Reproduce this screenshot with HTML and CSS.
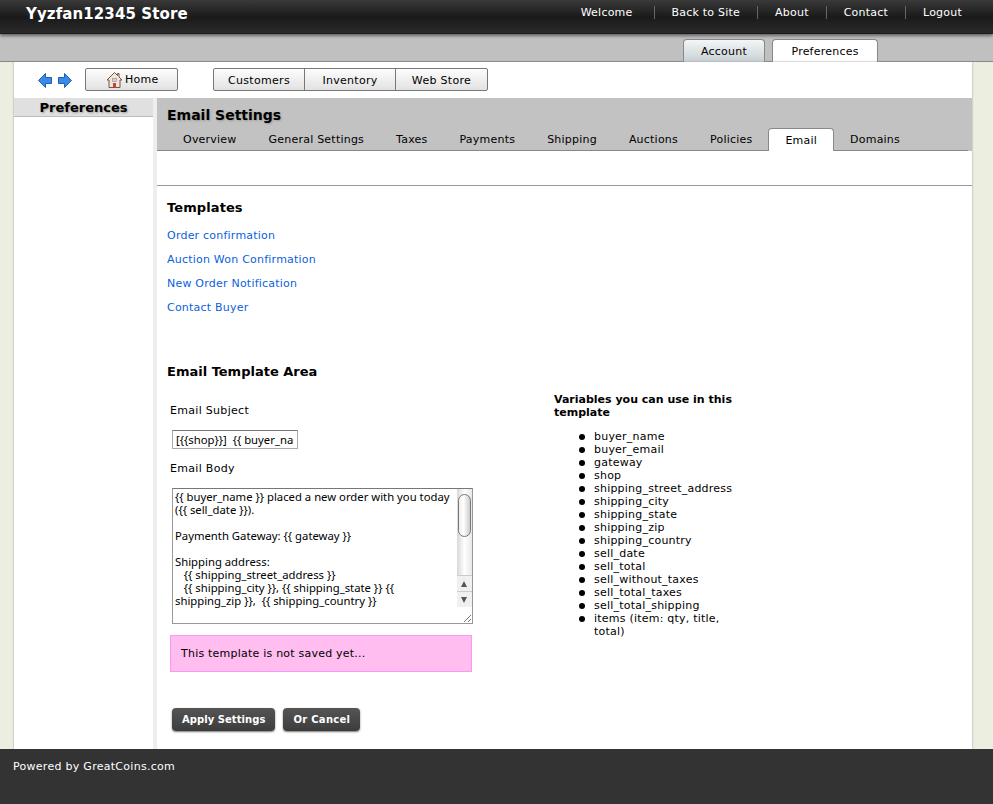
FILE: index.html
```html
<!DOCTYPE html>
<html>
  <head>
    <meta charset="utf-8">
    <title>Email Settings</title>
    <link rel="stylesheet" href="styles.css">
  </head>
  <body>
    <div id="top">
      <div class="store">Yyzfan12345 Store</div>
      <ul class="topnav">
        <li>Welcome</li>
        <li>Back to Site</li>
        <li>About</li>
        <li>Contact</li>
        <li>Logout</li>
      </ul>
    </div>
    <div id="subbar">
      <a class="subtab">Account</a>
      <a class="subtab active">Preferences</a>
    </div>
    <div id="page">
      <div id="toolbar">
        <div class="arrows">
          <svg width="15" height="15" viewBox="0 0 15 15"><path d="M.5 7.500 7.500.5V4.500H13.500V10.500H7.500V14.500Z" fill="#3a8be6" stroke="#1d5fb4"/></svg>
          <svg width="15" height="15" viewBox="0 0 15 15"><path d="M14.500 7.500 7.500.5V4.500H1.500V10.500H7.500V14.500Z" fill="#3a8be6" stroke="#1d5fb4"/></svg>
        </div>
        <a class="tbtn home">
          <svg width="17" height="18" viewBox="0 0 17 17"><path d="M8.500 1 1 8.500H3V16H14V8.500H16L13 5.500V2H11.500V4Z" fill="#efe6dc" stroke="#7a5240"/><rect x="6.500" y="7" width="4" height="3" fill="#c9d3e0" stroke="#9a8a80" stroke-width=".6"/><rect x="7" y="11.500" width="3" height="4.500" fill="#c8403a"/></svg>
          Home
        </a>
        <div class="tgroup">
          <a class="tbtn">Customers</a>
          <a class="tbtn">Inventory</a>
          <a class="tbtn">Web Store</a>
        </div>
      </div>
      <div id="columns">
        <div id="side">
          <h3>Preferences</h3>
        </div>
        <div id="main">
          <div class="mainhead">
            <h2>Email Settings</h2>
            <div class="tabs">
              <a>Overview</a>
              <a>General Settings</a>
              <a>Taxes</a>
              <a>Payments</a>
              <a>Shipping</a>
              <a>Auctions</a>
              <a>Policies</a>
              <a class="active">Email</a>
              <a>Domains</a>
            </div>
          </div>
          <div class="spacer"></div>
          <div class="content">
            <h4>Templates</h4>
            <ul class="links">
              <li><a>Order confirmation</a></li>
              <li><a>Auction Won Confirmation</a></li>
              <li><a>New Order Notification</a></li>
              <li><a>Contact Buyer</a></li>
            </ul>
            <h4 class="area">Email Template Area</h4>
            <div class="formrow">
              <form class="tform">
                <label>Email Subject</label>
                <input type="text" class="subject" value="[{{shop}}]  {{ buyer_name }}">
                <label class="bodylabel">Email Body</label>
                <div class="bodywrap">
                  <textarea class="body" spellcheck="false">{{ buyer_name }} placed a new order with you today ({{ sell_date }}).

Paymenth Gateway: {{ gateway }}

Shipping address:
   {{ shipping_street_address }}
   {{ shipping_city }}, {{ shipping_state }} {{ shipping_zip }},  {{ shipping_country }}</textarea>
                  <div class="scroll">
                    <div class="thumb"></div>
                    <div class="sbtn up"></div>
                    <div class="sbtn down"></div>
                  </div>
                  <svg class="grip" width="9" height="9" viewBox="0 0 9 9"><path d="M1 8 8 1M5 8 8 5" stroke="#777" fill="none"/></svg>
                </div>
                <div class="notice">This template is not saved yet...</div>
                <div class="actions">
                  <a class="dark">Apply Settings</a>
                  <a class="dark">Or Cancel</a>
                </div>
              </form>
              <div class="vars">
                <h5>Variables you can use in this template</h5>
                <ul>
                  <li>buyer_name</li>
                  <li>buyer_email</li>
                  <li>gateway</li>
                  <li>shop</li>
                  <li>shipping_street_address</li>
                  <li>shipping_city</li>
                  <li>shipping_state</li>
                  <li>shipping_zip</li>
                  <li>shipping_country</li>
                  <li>sell_date</li>
                  <li>sell_total</li>
                  <li>sell_without_taxes</li>
                  <li>sell_total_taxes</li>
                  <li>sell_total_shipping</li>
                  <li>items (item: qty, title, total)</li>
                </ul>
              </div>
            </div>
          </div>
        </div>
      </div>
    </div>
    <div id="footer">Powered by GreatCoins.com</div>
  </body>
</html>
```

FILE: styles.css
```css
* {
  box-sizing: border-box;
}
html, body {
  height: 100%;
}
body {
  margin: 0;
  height: 804px;
  overflow: hidden;
  display: flex;
  flex-direction: column;
  background: #eceee0;
  font-family: "DejaVu Sans", Verdana, sans-serif;
  font-size: 11px;
  letter-spacing: .22px;
  color: #000;
}

#top {
  height: 34px;
  flex: none;
  display: flex;
  justify-content: space-between;
  background: linear-gradient(#3a3a3a, #1a1a1a 50%, #2a2a2a 96%, #111);
  color: #fff;
  box-shadow: 0 2px 3px #666;
  position: relative;
}
.store {
  margin-left: 26px;
  margin-top: 5px;
  font-size: 15px;
  line-height: 18px;
  font-weight: bold;
  letter-spacing: .1px;
}
.topnav {
  list-style: none;
  margin: 6px 14px 0 0;
  padding: 0;
  display: flex;
}
.topnav li {
  height: 13px;
  line-height: 13px;
  padding: 0 17px;
  border-left: 1px solid #666;
  font-weight: 500;
}
.topnav li:first-child {
  border-left: none;
  padding-right: 21px;
}

#subbar {
  height: 28px;
  flex: none;
  background: #c0c0c0;
  border-bottom: 1px solid #888;
  display: flex;
  align-items: flex-end;
  padding: 0 0 0 683px;
  gap: 7px;
}
.subtab {
  height: 23px;
  margin-bottom: -1px;
  padding: 0 17px;
  line-height: 23px;
  border: 1px solid #888;
  border-bottom: none;
  border-radius: 4px 4px 0 0;
  background: linear-gradient(#f4f6f7, #c8d0d4);
}
.subtab.active {
  padding: 0 18px 0 18.500px;
  background: #fff;
}

#page {
  flex: 1;
  min-height: 0;
  margin: 0 21px 0 14px;
  background: #fff;
  display: flex;
  flex-direction: column;
  box-shadow: 0 0 2px #999;
}

#toolbar {
  height: 36px;
  flex: none;
  display: flex;
  align-items: flex-start;
  padding: 6px 0 0 24px;
}
.arrows {
  display: flex;
  gap: 4px;
  width: 47px;
  padding-top: 5px;
}
.tbtn {
  display: block;
  height: 23px;
  line-height: 23px;
  border: 1px solid #777;
  border-radius: 2px;
  background: linear-gradient(#fdfdfd, #e2e2e2);
}
.home {
  width: 93px;
  display: flex;
  align-items: center;
  gap: 2px;
  padding: 0 0 0 20px;
  line-height: 21px;
}
.tgroup {
  display: flex;
  margin-left: 35px;
}
.tgroup .tbtn {
  width: 92px;
  text-align: center;
  letter-spacing: .3px;
  border-radius: 0;
  margin-left: -1px;
}
.tgroup .tbtn:first-child {
  margin-left: 0;
  border-radius: 2px 0 0 2px;
}
.tgroup .tbtn:last-child {
  border-radius: 0 2px 2px 0;
  width: 93px;
}

#columns {
  flex: 1;
  min-height: 0;
  display: flex;
}
#side {
  width: 143px;
  flex: none;
  border-right: 4px solid #eee;
}
#side h3 {
  margin: 0;
  height: 19px;
  background: #e0e0e0;
  border-bottom: 1px solid #bbb;
  text-align: center;
  font-size: 13px;
  line-height: 19px;
  letter-spacing: 0;
  text-shadow: 1px 1px 2px #999;
}

#main {
  flex: 1;
  min-width: 0;
}
.mainhead {
  height: 53px;
  background: #c2c2c2;
  padding-top: 8px;
}
.mainhead h2 {
  margin: 0 0 0 10px;
  font-size: 14px;
  line-height: 18px;
  letter-spacing: 0;
  text-shadow: 1px 1px 2px #999;
}
.tabs {
  display: flex;
  height: 27px;
  margin: 0 4px 0 0;
  padding-left: 10px;
  align-items: flex-end;
  border-bottom: 1px solid #888;
}
.tabs a {
  height: 22px;
  padding: 0 16px;
  line-height: 24px;
}
.tabs a.active {
  background: #fff;
  border: 1px solid #888;
  border-bottom: none;
  border-radius: 4px 4px 0 0;
  line-height: 23px;
  margin-bottom: -1px;
  height: 23px;
}
.spacer {
  height: 35px;
  border-bottom: 1px solid #999;
}

.content {
  padding: 13px 10px 0;
}
h4 {
  margin: 0;
  font-size: 13px;
  line-height: 18px;
  letter-spacing: .1px;
}
.links {
  list-style: none;
  margin: 7px 0 0;
  padding: 0;
}
.links li {
  height: 24px;
  line-height: 24px;
}
.links a {
  color: #0a5fe0;
}
h4.area {
  margin-top: 43px;
  letter-spacing: 0;
}
.formrow {
  display: flex;
  margin-top: 10px;
}
.tform {
  width: 387px;
  flex: none;
  padding: 12px 0 0 3px;
}
.tform label {
  display: block;
  line-height: 14px;
  margin-top: 1px;
  letter-spacing: .3px;
}
.subject {
  display: block;
  width: 126px;
  height: 19px;
  margin: 12px 0 0 2px;
  padding: 0 3px;
  border: 1px solid #aaa;
  border-top-color: #777;
  font: 11.300px "Noto Sans", sans-serif;
}
.tform label.bodylabel {
  margin-top: 13px;
}
.bodywrap {
  position: relative;
  width: 301px;
  height: 136px;
  margin: 12px 0 0 2px;
}
.body {
  display: block;
  width: 100%;
  height: 100%;
  padding: 1px 16px 0 2px;
  border: 1px solid #999;
  border-top-color: #777;
  resize: none;
  overflow: hidden;
  font: 11.300px/13px "Noto Sans", sans-serif;
  color: #000;
}
.scroll {
  position: absolute;
  top: 1px;
  right: 1px;
  width: 15px;
  height: 118px;
  background: linear-gradient(90deg, #d8d8d8, #fff 50%, #e8e8e8);
}
.thumb {
  position: absolute;
  top: 5px;
  left: 1px;
  width: 13px;
  height: 43px;
  border: 1px solid #777;
  border-radius: 7px;
  background: linear-gradient(90deg, #eee, #fff 40%, #ccc);
}
.sbtn {
  position: absolute;
  left: 0;
  width: 15px;
  height: 16px;
  background: #f0f0f0;
  border-top: 1px solid #ccc;
}
.sbtn::after {
  content: "";
  position: absolute;
  left: 4px;
  top: 5px;
  border-left: 3.500px solid transparent;
  border-right: 3.500px solid transparent;
}
.sbtn.up {
  top: 86px;
}
.sbtn.up::after {
  border-bottom: 6px solid #555;
}
.sbtn.down {
  top: 102px;
}
.sbtn.down::after {
  border-top: 6px solid #555;
}
.grip {
  position: absolute;
  right: 1px;
  bottom: 1px;
}
.notice {
  width: 302px;
  height: 37px;
  margin-top: 11px;
  padding: 0 10px;
  line-height: 35px;
  background: #ffbdf0;
  border: 1px solid #fb98f4;
}
.actions {
  display: flex;
  gap: 8px;
  margin: 36px 0 0 2px;
}
.dark {
  display: block;
  height: 23px;
  padding: 0 10px;
  line-height: 23px;
  border-radius: 4px;
  background: linear-gradient(#555, #3c3c3c);
  color: #fff;
  font-size: 10px;
  letter-spacing: .05px;
  font-weight: bold;
  box-shadow: 0 1px 2px #777;
}
.dark + .dark {
  padding: 0 10px;
  letter-spacing: .3px;
}
.vars {
  width: 190px;
  margin-left: 0;
}
.vars h5 {
  margin: 2px 0 0;
  font-size: 11px;
  line-height: 13px;
  letter-spacing: 0;
}
.vars ul {
  list-style: none;
  margin: 11px 0 0;
  padding-left: 40px;
}
.vars li {
  position: relative;
  line-height: 13px;
}
.vars li::before {
  content: "";
  position: absolute;
  left: -15px;
  top: 4px;
  width: 6px;
  height: 6px;
  border-radius: 50%;
  background: #000;
}

#footer {
  height: 55px;
  flex: none;
  padding: 11px 13px;
  line-height: 14px;
  letter-spacing: .28px;
  background: #333;
  color: #fff;
  position: relative;
}
```
